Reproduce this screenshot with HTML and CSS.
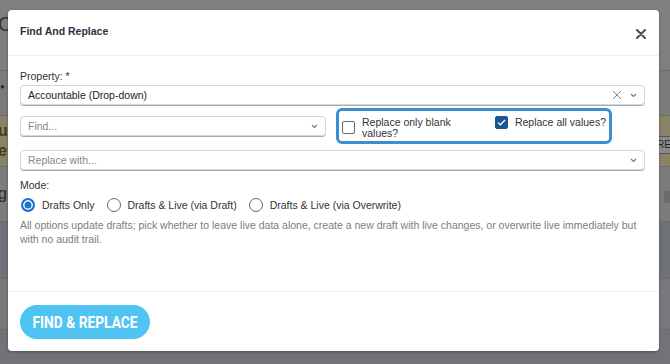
FILE: index.html
```html
<!DOCTYPE html>
<html lang="en">
<head>
    <meta charset="UTF-8">
    <meta name="viewport" content="width=device-width, initial-scale=1.0">
    <title>Find And Replace</title>
    <link rel="stylesheet" href="styles.css">
</head>
<body>
    <div class="backdrop">
        <div class="band band-top"><span class="peek peek-c">C</span></div>
        <div class="band band-grey"><span class="peek peek-dot">&#9679;</span></div>
        <div class="band band-yellow">
            <span class="peek">u</span>
            <span class="peek">e</span>
            <span class="peek-btn">RE</span>
        </div>
        <div class="band band-grey2"><span class="peek">g</span><span class="peek-grey-btn"></span></div>
        <div class="band band-dark"></div>
        <div class="band band-mid"></div>
        <div class="band band-bottom"></div>
    </div>

    <div class="modal">
        <div class="modal-header">
            <h3>Find And Replace</h3>
            <svg class="close" width="10" height="10" viewBox="0 0 10 10">
                <path d="M1 1L9 9M9 1L1 9" stroke="#555" stroke-width="2.2" stroke-linecap="round"/>
            </svg>
        </div>

        <div class="modal-body">
            <label class="field-label">Property: *</label>
            <div class="select">
                <span class="value">Accountable (Drop-down)</span>
                <svg class="clear" width="10" height="10" viewBox="0 0 10 10">
                    <path d="M1 1L9 9M9 1L1 9" stroke="#8a8a8a" stroke-width="1"/>
                </svg>
                <svg class="chev" width="7" height="5" viewBox="0 0 7 5">
                    <path d="M1 1L3.5 3.5L6 1" fill="none" stroke="#777" stroke-width="1.1"/>
                </svg>
            </div>

            <div class="find-row">
                <div class="select find">
                    <span class="placeholder">Find...</span>
                    <svg class="chev" width="7" height="5" viewBox="0 0 7 5">
                        <path d="M1 1L3.5 3.5L6 1" fill="none" stroke="#777" stroke-width="1.1"/>
                    </svg>
                </div>
                <div class="options">
                    <div class="option option-blank">
                        <span class="checkbox"></span>
                        <span class="option-text">Replace only blank values?</span>
                    </div>
                    <div class="option option-all">
                        <span class="checkbox checked">
                            <svg width="9" height="7" viewBox="0 0 9 7">
                                <path d="M1 3.6L3.3 5.8L8 1" fill="none" stroke="#fff" stroke-width="1.3"/>
                            </svg>
                        </span>
                        <span class="option-text">Replace all values?</span>
                    </div>
                </div>
            </div>

            <div class="select replace">
                <span class="placeholder">Replace with...</span>
                <svg class="chev" width="7" height="5" viewBox="0 0 7 5">
                    <path d="M1 1L3.5 3.5L6 1" fill="none" stroke="#777" stroke-width="1.1"/>
                </svg>
            </div>

            <label class="field-label mode-label">Mode:</label>
            <div class="radios">
                <span class="radio checked"></span><span class="radio-text">Drafts Only</span>
                <span class="radio"></span><span class="radio-text">Drafts &amp; Live (via Draft)</span>
                <span class="radio"></span><span class="radio-text">Drafts &amp; Live (via Overwrite)</span>
            </div>
            <p class="help">All options update drafts; pick whether to leave live data alone, create a new draft with live changes, or overwrite live immediately but with no audit trail.</p>
        </div>

        <div class="modal-footer">
            <button class="go-button"><span>FIND &amp; REPLACE</span></button>
        </div>
    </div>
</body>
</html>
```

FILE: styles.css
```css
body {
    margin: 0;
    font-family: "Liberation Sans", Arial, sans-serif;
    color: #333;
    overflow: hidden;
}
.backdrop {
    height: 364px;
    display: flex;
    flex-direction: column;
}
.band {
    display: flex;
    flex-direction: column;
    justify-content: center;
    border-bottom: 1px solid #6c6c6c;
    position: relative;
}
.band-top { height: 70px; background: #7f7f7f; }
.band-grey { height: 44px; background: #7b7b7b; }
.band-yellow { height: 50px; background: #8b8368; }
.band-grey2 { height: 54px; background: #7c7c7c; }
.band-dark { height: 56px; background: #6e7277; }
.band-mid { height: 50px; background: #76787b; }
.band-bottom { flex: 1; background: #717378; border-bottom: none; }
.peek {
    font-size: 16px;
    color: #2a2a2a;
    margin-left: -2px;
    line-height: 20px;
}
.band-yellow .peek { color: #4a3a10; font-weight: bold; }
.peek-c { color: #333; font-size: 20px; margin-top: -22px; }
.peek-dot { font-size: 8px; margin-left: 0; margin-top: -12px; }
.peek-btn {
    position: absolute;
    right: -4px;
    top: 20px;
    width: 16px;
    height: 16px;
    border: 1px solid #555;
    background: #8a8a8a;
    font-size: 10px;
    color: #222;
    line-height: 16px;
}
.peek-grey-btn {
    position: absolute;
    right: -4px;
    top: 24px;
    width: 10px;
    height: 12px;
    border-radius: 2px;
    background: #6a6a6a;
}

/* dialog */
.modal {
    position: absolute;
    left: 8px;
    top: 10px;
    width: 651px;
    height: 341px;
    background: #fff;
    border-radius: 4px;
    display: flex;
    flex-direction: column;
    box-shadow: 0 1px 3px rgba(0, 0, 0, 0.3);
}
.modal-header {
    height: 45px;
    padding: 0 12px;
    border-bottom: 1px solid #eee;
    display: flex;
    align-items: center;
    justify-content: space-between;
}
.modal-header h3 {
    margin: 0;
    font-size: 10.5px;
    font-weight: bold;
    color: #2b3040;
    margin-top: -4px;
}
.close {
    margin-right: 1px;
    margin-top: 2px;
}
.modal-body {
    flex: 1;
    padding: 13px 14px 0 12px;
    font-size: 10.5px;
}
.field-label {
    display: block;
    line-height: 14px;
    margin-bottom: 2px;
    color: #333;
}
.select {
    height: 18px;
    border: 1px solid #d6d6d6;
    border-radius: 4px;
    box-shadow: 0 1px 0 #aaa;
    display: flex;
    align-items: center;
    padding: 0 7px;
    gap: 9px;
}
.select .value {
    flex: 1;
    font-size: 10.5px;
    color: #222;
}
.select .placeholder {
    flex: 1;
    color: #888;
    font-size: 10.5px;
}
.clear {
    margin-right: -1px;
}
.find-row {
    display: flex;
    align-items: center;
    gap: 10px;
    margin-top: 3px;
}
.select.find {
    width: 290px;
}
.options {
    width: 264px;
    height: 30px;
    border: 3px solid #3b8fd0;
    border-radius: 6px;
    display: flex;
    align-items: center;
    padding: 0 3px 0 3px;
}
.option {
    display: flex;
    gap: 7px;
}
.option-blank {
    width: 156px;
    align-items: center;
    margin-top: 3px;
}
.option-blank .option-text {
    width: 100px;
    line-height: 11px;
}
.option-all {
    align-items: flex-start;
    margin-top: -8px;
}
.option-all .option-text {
    white-space: nowrap;
}
.option-text {
    font-size: 10.5px;
    color: #333;
    line-height: 13px;
}
.checkbox {
    width: 11px;
    height: 11px;
    border: 1px solid #666;
    border-radius: 2px;
    flex-shrink: 0;
    display: flex;
    align-items: center;
    justify-content: center;
}
.checkbox.checked {
    background: #1c5691;
    border-color: #1c5691;
}
.select.replace {
    margin-top: 6px;
}
.mode-label {
    margin-top: 8px;
    margin-bottom: 5px;
}
.radios {
    display: flex;
    align-items: center;
    height: 16px;
}
.radio {
    width: 12px;
    height: 12px;
    border: 1px solid #666;
    border-radius: 50%;
    margin-left: 1px;
    margin-right: 7px;
}
.radio.checked {
    width: 10px;
    height: 10px;
    border: 2px solid #1a73d4;
    background: #1a73d4;
    box-shadow: inset 0 0 0 1.5px #fff;
}
.radio-text {
    font-size: 10.5px;
    color: #333;
    margin-right: 11px;
}
.help {
    margin: 5px 0 0;
    font-size: 10.5px;
    line-height: 14px;
    color: #7d7d7d;
}
.modal-footer {
    height: 60px;
    border-top: 1px solid #f0f0f0;
    padding: 13px 12px 0;
    box-sizing: border-box;
}
.go-button {
    width: 130px;
    height: 34px;
    border: none;
    border-radius: 17px;
    background: #4fc3f1;
    color: #fff;
    font-family: Roboto, sans-serif;
    font-weight: bold;
    font-size: 16px;
    padding: 0;
}
.go-button span {
    display: inline-block;
    transform: scaleX(0.86);
}
```
